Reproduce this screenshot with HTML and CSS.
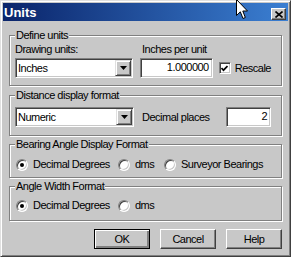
FILE: index.html
```html
<!DOCTYPE html>
<html lang="en">
<head>
    <meta charset="UTF-8">
    <title>Units</title>
    <link rel="stylesheet" href="styles.css">
</head>
<body>
    <div class="window">
        <div class="title-bar">
            <span class="title">Units</span>
            <span class="close-button">
                <svg width="8" height="7" viewBox="0 0 8 7"><path d="M0.5 0.5 L7.5 6.5 M7.5 0.5 L0.5 6.5" stroke="#000" stroke-width="1.6"/></svg>
            </span>
        </div>
        <div class="dialog-body">
            <fieldset class="group group-define">
                <legend>Define units</legend>
                <div class="label-row">
                    <span class="label label-first">Drawing units:</span>
                    <span class="label">Inches per unit</span>
                </div>
                <div class="control-row">
                    <div class="combo">
                        <span class="combo-text">Inches</span>
                        <span class="combo-button"><svg width="7" height="4" viewBox="0 0 7 4"><path d="M0 0h7L3.5 4z" fill="#000"/></svg></span>
                    </div>
                    <div class="field field-units">1.000000</div>
                    <div class="check-item">
                        <span class="checkbox"><svg width="7" height="7" viewBox="0 0 7 7"><path d="M0.5 3 L2.5 5.2 L6.5 1" stroke="#000" stroke-width="1.7" fill="none"/></svg></span>
                        <span>Rescale</span>
                    </div>
                </div>
            </fieldset>

            <fieldset class="group group-distance">
                <legend>Distance display format</legend>
                <div class="control-row">
                    <div class="combo">
                        <span class="combo-text">Numeric</span>
                        <span class="combo-button"><svg width="7" height="4" viewBox="0 0 7 4"><path d="M0 0h7L3.5 4z" fill="#000"/></svg></span>
                    </div>
                    <span class="label label-places">Decimal places</span>
                    <div class="field field-places">2</div>
                </div>
            </fieldset>

            <fieldset class="group group-bearing">
                <legend>Bearing Angle Display Format</legend>
                <div class="radio-row">
                    <div class="option"><span class="radio checked"></span>Decimal Degrees</div>
                    <div class="option"><span class="radio"></span>dms</div>
                    <div class="option"><span class="radio"></span>Surveyor Bearings</div>
                </div>
            </fieldset>

            <fieldset class="group group-angle">
                <legend>Angle Width Format</legend>
                <div class="radio-row">
                    <div class="option"><span class="radio checked"></span>Decimal Degrees</div>
                    <div class="option"><span class="radio"></span>dms</div>
                </div>
            </fieldset>

            <div class="button-row">
                <span class="button button-default">OK</span>
                <span class="button">Cancel</span>
                <span class="button">Help</span>
            </div>
        </div>
    </div>
    <svg class="cursor" width="13" height="21" viewBox="0 0 13 21"><path d="M0.5 0.5 V16.5 L4.3 12.8 L7 19.5 L9.3 18.5 L6.8 12 H11.5 Z" fill="#fff" stroke="#000" stroke-width="1"/></svg>
</body>
</html>
```

FILE: styles.css
```css
body {
    margin: 0;
    background: #fff;
    font-family: "Liberation Sans", Arial, sans-serif;
    font-size: 11px;
    letter-spacing: -0.5px;
    color: #000;
    position: relative;
}
.window {
    width: 291px;
    height: 257px;
    box-sizing: border-box;
    background: #c8c8c8;
    border: 1px solid;
    border-color: #e0e0e0 #404040 #404040 #e0e0e0;
    box-shadow: inset 1px 1px 0 #fff, inset -1px -1px 0 #808080;
    padding: 2px;
}
.title-bar {
    height: 18px;
    box-sizing: border-box;
    display: flex;
    align-items: flex-end;
    justify-content: space-between;
    padding: 0 2px 1px 1px;
    background: linear-gradient(to right, #0a246a, #3b7fd2);
}
.title {
    color: #fff;
    font-weight: bold;
    font-size: 13px;
    letter-spacing: 0;
    line-height: 15px;
}
.close-button {
    width: 15px;
    height: 12px;
    box-sizing: border-box;
    display: flex;
    align-items: center;
    justify-content: center;
    background: #c8c8c8;
    border: 1px solid;
    border-color: #fff #404040 #404040 #fff;
    box-shadow: inset -1px -1px 0 #808080;
}
.dialog-body {
    padding: 8px 6px 0;
}
.group {
    margin: 0;
    min-width: 0;
    border: 1px solid #808080;
    box-shadow: 1px 1px 0 #fff, inset 1px 1px 0 #fff;
}
.group legend {
    padding: 0 1px;
    line-height: 13px;
    background: #c8c8c8;
}
.group-define {
    padding: 1px 10px 7px 5px;
}
.group-distance {
    margin-top: 3px;
    padding: 5px 10px 8px 5px;
}
.group-bearing {
    margin-top: 2px;
    padding: 7px 10px 6px 5px;
}
.group-angle {
    margin-top: 2px;
    padding: 6px 10px 8px 5px;
}
.label-row {
    display: flex;
    line-height: 13px;
    margin-bottom: 2px;
}
.label-first {
    width: 127px;
}
.control-row {
    display: flex;
    align-items: center;
}
.combo {
    width: 119px;
    height: 20px;
    box-sizing: border-box;
    display: flex;
    align-items: center;
    padding: 1px;
    background: #fff;
    border: 1px solid;
    border-color: #808080 #fff #fff #808080;
    box-shadow: inset 1px 1px 0 #404040, inset -1px -1px 0 #c8c8c8;
}
.combo-text {
    flex: 1;
    padding-left: 1px;
}
.combo-button {
    width: 16px;
    height: 16px;
    box-sizing: border-box;
    display: flex;
    align-items: center;
    justify-content: center;
    background: #c8c8c8;
    border: 1px solid;
    border-color: #e0e0e0 #404040 #404040 #e0e0e0;
    box-shadow: inset 1px 1px 0 #fff, inset -1px -1px 0 #808080;
}
.field {
    height: 20px;
    box-sizing: border-box;
    line-height: 16px;
    text-align: right;
    padding-right: 3px;
    background: #fff;
    border: 1px solid;
    border-color: #808080 #fff #fff #808080;
    box-shadow: inset 1px 1px 0 #404040, inset -1px -1px 0 #c8c8c8;
}
.field-units {
    width: 73px;
    margin-left: 7px;
}
.field-places {
    width: 45px;
    margin-left: auto;
}
.label-places {
    margin-left: 8px;
}
.check-item {
    display: flex;
    align-items: center;
    gap: 4px;
    margin-left: 6px;
}
.checkbox {
    width: 12px;
    height: 12px;
    box-sizing: border-box;
    display: flex;
    align-items: center;
    justify-content: center;
    background: #fff;
    border: 1px solid;
    border-color: #808080 #fff #fff #808080;
    box-shadow: inset 1px 1px 0 #404040, inset -1px -1px 0 #c8c8c8;
}
.radio-row {
    display: grid;
    grid-template-columns: 102px 46px auto;
    padding-left: 1px;
    line-height: 13px;
}
.option {
    display: flex;
    align-items: center;
    gap: 5px;
}
.radio {
    width: 12px;
    height: 12px;
    box-sizing: border-box;
    display: flex;
    align-items: center;
    justify-content: center;
    border-radius: 50%;
    background: #fff;
    border: 1px solid;
    border-color: #808080 #fff #fff #808080;
    box-shadow: inset 1px 1px 0 #404040, inset -1px -1px 0 #c8c8c8;
}
.radio.checked::after {
    content: "";
    width: 4px;
    height: 4px;
    border-radius: 50%;
    background: #000;
}
.button-row {
    display: flex;
    justify-content: flex-end;
    gap: 10px;
    margin-top: 8px;
}
.button {
    width: 56px;
    height: 20px;
    box-sizing: border-box;
    display: flex;
    align-items: center;
    justify-content: center;
    background: #c8c8c8;
    border: 1px solid;
    border-color: #fff #404040 #404040 #fff;
    box-shadow: inset -1px -1px 0 #808080;
}
.button-default {
    border-color: #000;
    box-shadow: inset 1px 1px 0 #fff, inset -2px -2px 0 #808080, inset -1px -1px 0 #404040;
}
.cursor {
    position: absolute;
    left: 236px;
    top: -1px;
}
```
